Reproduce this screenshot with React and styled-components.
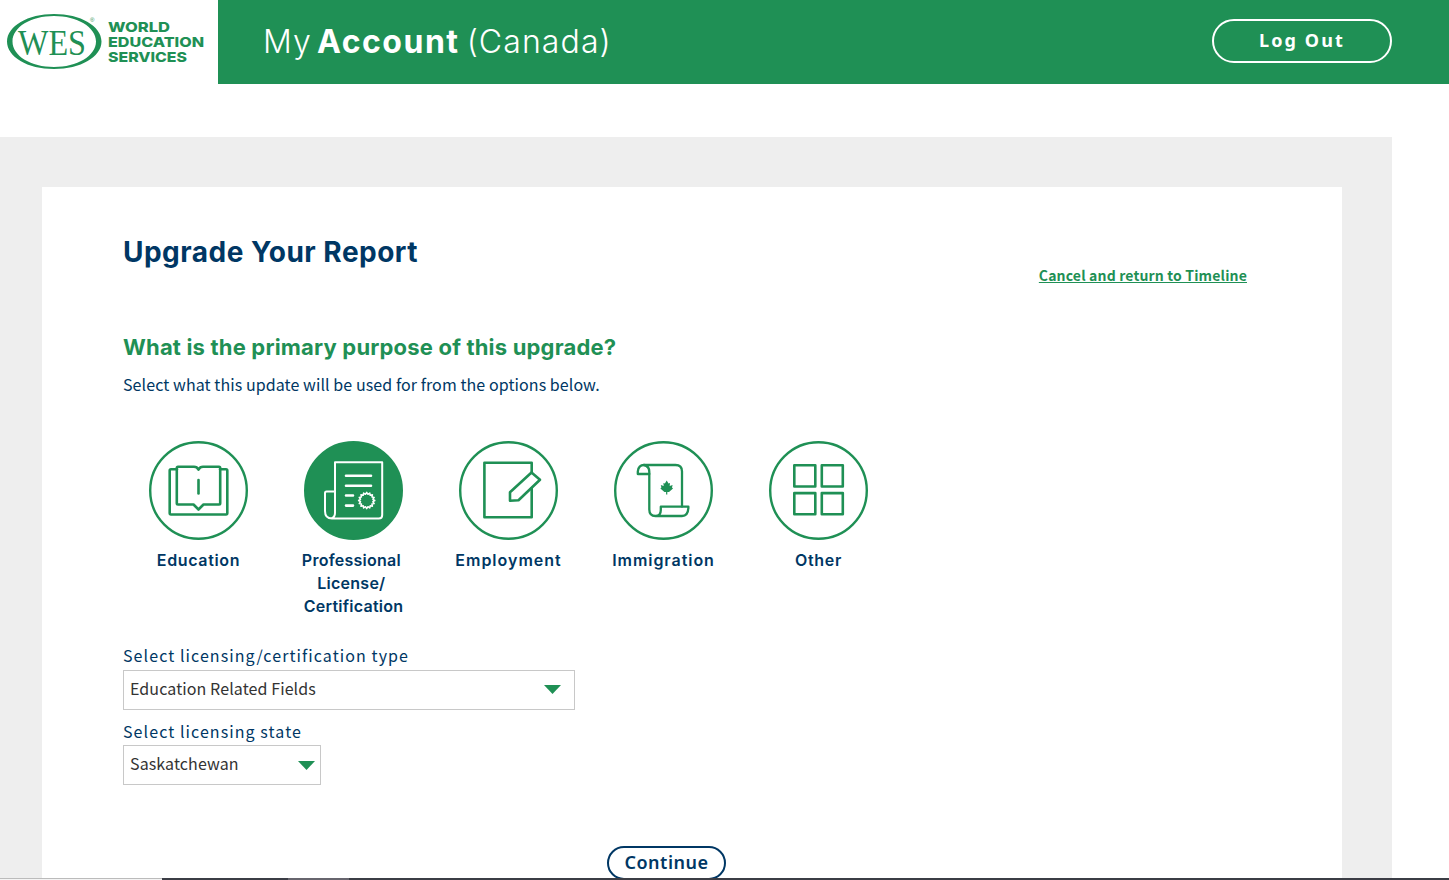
import { useState } from 'react'
import styled, { createGlobalStyle, css } from 'styled-components'

const green = '#1f9055'
const navy = '#003764'
const heading = "Inter, 'Open Sans', sans-serif"
const body = "'Noto Sans CJK SC', 'Open Sans', sans-serif"

const GlobalStyle = createGlobalStyle`
  * {
    box-sizing: border-box;
  }

  body {
    margin: 0;
    background: #fff;
    color: ${navy};
    font-family: ${body};
  }
`

const Page = styled.div`
  height: 880px;
  overflow: hidden;
`

const Header = styled.header`
  display: flex;
  align-items: center;
  height: 84px;
  padding-right: 57px;
  background: ${green};
`

const LogoBox = styled.div`
  width: 218px;
  height: 84px;
  background: #fff;
`

const AppTitle = styled.div`
  flex-grow: 1;
  padding-left: 45px;
  color: #fff;
  font-family: ${heading};
  font-size: 32px;
  font-weight: 300;
  line-height: 40px;
  letter-spacing: 1.1px;
  word-spacing: -4px;
  white-space: nowrap;

  b {
    margin: 0 1px 0 -1px;
    font-weight: 700;
    letter-spacing: 1.5px;
  }
`

const LogOut = styled.button`
  width: 180px;
  height: 44px;
  margin-bottom: 2px;
  padding: 0 0 3px;
  border: 2px solid #fff;
  border-radius: 22px;
  background: transparent;
  color: #fff;
  font-family: 'Noto Sans', sans-serif;
  font-size: 18px;
  font-weight: 700;
  letter-spacing: 2.1px;
`

const Main = styled.main`
  width: 1392px;
  height: 743px;
  margin-top: 53px;
  padding: 50px 50px 0 42px;
  background: #eee;
`

const Card = styled.section`
  height: 693px;
  padding: 47px 95px 0 81px;
  background: #fff;
`

const TitleRow = styled.div`
  display: flex;
  justify-content: space-between;
`

const Title = styled.h1`
  margin: 0;
  font-family: ${heading};
  font-size: 28px;
  font-weight: 700;
  line-height: 36px;
  letter-spacing: 0.48px;
`

const CancelLink = styled.a`
  margin-top: 30px;
  color: ${green};
  font-size: 14px;
  font-weight: 700;
  line-height: 22px;
  letter-spacing: 0.16px;
  text-decoration: underline;
`

const Question = styled.h2`
  margin: 46px 0 0;
  color: ${green};
  font-family: ${heading};
  font-size: 22px;
  font-weight: 700;
  line-height: 30px;
  letter-spacing: 0.18px;
`

const Hint = styled.p`
  margin: 10px 0 0;
  font-size: 16px;
  line-height: 24px;
  letter-spacing: 0.08px;
`

const Purposes = styled.div`
  display: flex;
  height: 180px;
  margin: 45px 0 0 -2px;
`

const PurposeButton = styled.button`
  display: flex;
  flex-direction: column;
  align-items: center;
  width: 155px;
  padding: 0;
  border: 0;
  background: none;
  color: ${navy};
  font-family: ${heading};
  font-size: 16px;
  font-weight: 600;
  line-height: 23px;
  letter-spacing: ${({ $spacing }) => $spacing || 0}px;
  white-space: pre;
`

const Badge = styled.svg`
  flex-shrink: 0;
  width: 99px;
  height: 99px;
  margin-bottom: 9px;
  fill: none;
  stroke: ${green};
  stroke-width: 2.6;
  stroke-linejoin: round;
  stroke-linecap: round;

  .ring {
    stroke-width: 2.4;
  }

  .leaf {
    fill: ${green};
    stroke: none;
  }

  ${({ $active }) => $active && css`
    stroke: #fff;

    .ring {
      fill: ${green};
      stroke: ${green};
    }
  `}
`

const Field = styled.div`
  margin-top: ${({ $gap }) => $gap}px;
`

const FieldLabel = styled.label`
  display: block;
  font-size: 16px;
  line-height: 24px;
  letter-spacing: 1.08px;
`

const SelectBox = styled.div`
  display: flex;
  justify-content: space-between;
  width: ${({ $width }) => $width}px;
  height: 40px;
  margin-top: ${({ $offset }) => $offset}px;
  padding: 5px ${({ $inset }) => $inset}px 0 6px;
  border: 1px solid #c8c8c8;
  color: #333;
  font-size: 16px;
  line-height: 24px;
  letter-spacing: 0.1px;
`

const Caret = styled.svg`
  width: 17px;
  height: 9px;
  margin-top: ${({ $drop }) => $drop}px;
  fill: ${green};
`

const Continue = styled.button`
  display: block;
  width: 119px;
  height: 34px;
  margin: 61px 0 0 484px;
  padding: 0 0 3px;
  border: 2px solid ${navy};
  border-radius: 17px;
  background: #fff;
  color: ${navy};
  font-family: 'Noto Sans', sans-serif;
  font-size: 18px;
  font-weight: 600;
  letter-spacing: 0.5px;
`

// thin strip lying over the bottom edge of the window
const BottomStrip = styled.div`
  position: fixed;
  left: 0;
  right: 0;
  bottom: 0;
  display: flex;
  height: 2px;
`

const Segment = styled.div`
  width: ${({ $width }) => $width};
  background: ${({ $color }) => $color};
  border-top: 1px solid ${({ $top, $color }) => $top || $color};
`

const Logo = () => (
  <svg width="218" height="84" viewBox="0 0 218 84" fill={green}>
    <path fillRule="evenodd" d="M54 14C80.500 14 101.500 26 101.500 41.500S80.500 69 54 69S7 57 7 41.500S28 14 54 14ZM54 16C31 16 12.500 27 12.500 41.500S31 67 54 67S96 56 96 41.500S77 16 54 16Z" />
    <text x="18" y="54.500" fontFamily="Liberation Serif, serif" fontSize="35" textLength="68" lengthAdjust="spacingAndGlyphs">WES</text>
    <text x="90" y="22" fontFamily="Liberation Sans, sans-serif" fontSize="6">®</text>
    <g fontFamily="Inter, sans-serif" fontWeight="800" fontSize="13.800">
      <text x="108" y="31.500" textLength="62" lengthAdjust="spacingAndGlyphs">WORLD</text>
      <text x="108" y="46.500" textLength="96" lengthAdjust="spacingAndGlyphs">EDUCATION</text>
      <text x="108" y="61.500" textLength="79" lengthAdjust="spacingAndGlyphs">SERVICES</text>
    </g>
  </svg>
)

// scalloped outline of the seal on the certificate
const sealPoints = Array.from({ length: 32 }, (_, i) => {
  const radius = i % 2 ? 6.3 : 8.1
  const angle = (i * Math.PI) / 16
  return `${62.7 + radius * Math.cos(angle)},${59.5 + radius * Math.sin(angle)}`
}).join(' ')

const purposes = [
  {
    label: 'Education',
    spacing: 0.65,
    icon: (
      <>
        <path d="M28 28.300H22Q20.700 28.300 20.700 29.600V72Q20.700 73.500 22 73.500H77Q78.300 73.500 78.300 72V29.600Q78.300 28.300 77 28.300H71" />
        <path d="M29 25.800H45C47 25.800 48.500 26.700 49.500 28.600C50.500 26.700 52 25.800 54 25.800H70Q71.200 25.800 71.200 27V62.300Q71.200 63.500 70 63.500H54.500L49.500 68.500L44.500 63.500H29Q27.800 63.500 27.800 62.300V27Q27.800 25.800 29 25.800Z" />
        <path d="M49.500 39V52.500" />
      </>
    ),
  },
  {
    label: 'Professional\u00a0\nLicense/\u00a0\nCertification',
    spacing: 0.25,
    icon: (
      <>
        <path d="M31 50.500H22.500Q21 50.500 21 52V70Q21 77.500 28 77.500H74.800Q78.200 77.500 78.200 74V21.200H31V72Q31 76 27.500 77.500" strokeWidth="2" />
        <path d="M42 34.700H67M42 44.700H67M42 54.500H49M42 64.600H49" />
        <polygon points={sealPoints} strokeWidth="1.500" />
      </>
    ),
  },
  {
    label: 'Employment',
    spacing: 1,
    icon: (
      <>
        <path d="M72.700 31V21.800H25.400V76.200H72.700V47" />
        <path d="M72.500 31.500L81 38.800L59.500 59.300L51 59.700V51.200Z" />
      </>
    ),
  },
  {
    label: 'Immigration',
    spacing: 0.95,
    icon: (
      <>
        <path d="M35.300 33H23.800V30.500Q24.500 24 30 24H61.500Q68 24 68 30.500V65.500" strokeWidth="2.300" />
        <path d="M30 24Q35.300 25 35.300 31V68.500Q35.300 75 41.500 75H68Q74.400 75 74.400 65.700H46.800V69Q46.800 75 41.500 75" strokeWidth="2.300" />
        <path className="leaf" d="M52.700 39.500L54.500 42.500L56 42L55.700 45L58.600 44L58 46.500L59 47.500L55 51H53.300V53.500H52.100V51H50.400L46.400 47.500L47.400 46.500L46.800 44L49.700 45L49.400 42L50.900 42.500Z" />
      </>
    ),
  },
  {
    label: 'Other',
    spacing: 0.7,
    icon: (
      <>
        <rect x="25.300" y="24.300" width="21" height="21.200" />
        <rect x="52.800" y="24.300" width="21" height="21.200" />
        <rect x="25.300" y="52.100" width="21" height="21.200" />
        <rect x="52.800" y="52.100" width="21" height="21.200" />
      </>
    ),
  },
]

const Select = ({ label, value, gap, width, inset, offset, drop }) => (
  <Field $gap={gap}>
    <FieldLabel>{label}</FieldLabel>
    <SelectBox $width={width} $inset={inset} $offset={offset}>
      {value}
      <Caret $drop={drop} viewBox="0 0 17 9"><path d="M0 0H17L8.500 9Z" /></Caret>
    </SelectBox>
  </Field>
)

const App = () => {
  const [selected, setSelected] = useState(1)

  return (
    <Page>
      <GlobalStyle />
      <Header>
        <LogoBox><Logo /></LogoBox>
        <AppTitle>My <b>Account</b> (Canada)</AppTitle>
        <LogOut>Log Out</LogOut>
      </Header>
      <Main>
        <Card>
          <TitleRow>
            <Title>Upgrade Your Report</Title>
            <CancelLink>Cancel and return to Timeline</CancelLink>
          </TitleRow>
          <Question>What is the primary purpose of this upgrade?</Question>
          <Hint>Select what this update will be used for from the options below.</Hint>
          <Purposes>
            {purposes.map(({ label, icon, spacing }, index) => (
              <PurposeButton key={label} $spacing={spacing} onClick={() => setSelected(index)}>
                <Badge viewBox="0 0 99 99" $active={index === selected}>
                  <circle className="ring" cx="49.500" cy="49.500" r="48.300" />
                  {icon}
                </Badge>
                {label}
              </PurposeButton>
            ))}
          </Purposes>
          <Select label="Select licensing/certification type" value="Education Related Fields" gap={22} width={452} inset={13} offset={3} drop={9} />
          <Select label="Select licensing state" value="Saskatchewan" gap={9} width={198} inset={5} offset={2} drop={10} />
          <Continue>Continue</Continue>
        </Card>
      </Main>
      <BottomStrip>
        <Segment $width="162px" $color="#f4f4f4" $top="#bbb" />
        <Segment $width="126px" $color="#3b3d45" />
        <Segment $width="61px" $color="#67656e" />
        <Segment $width="1100px" $color="#3b3d45" />
      </BottomStrip>
    </Page>
  )
}

export default App
